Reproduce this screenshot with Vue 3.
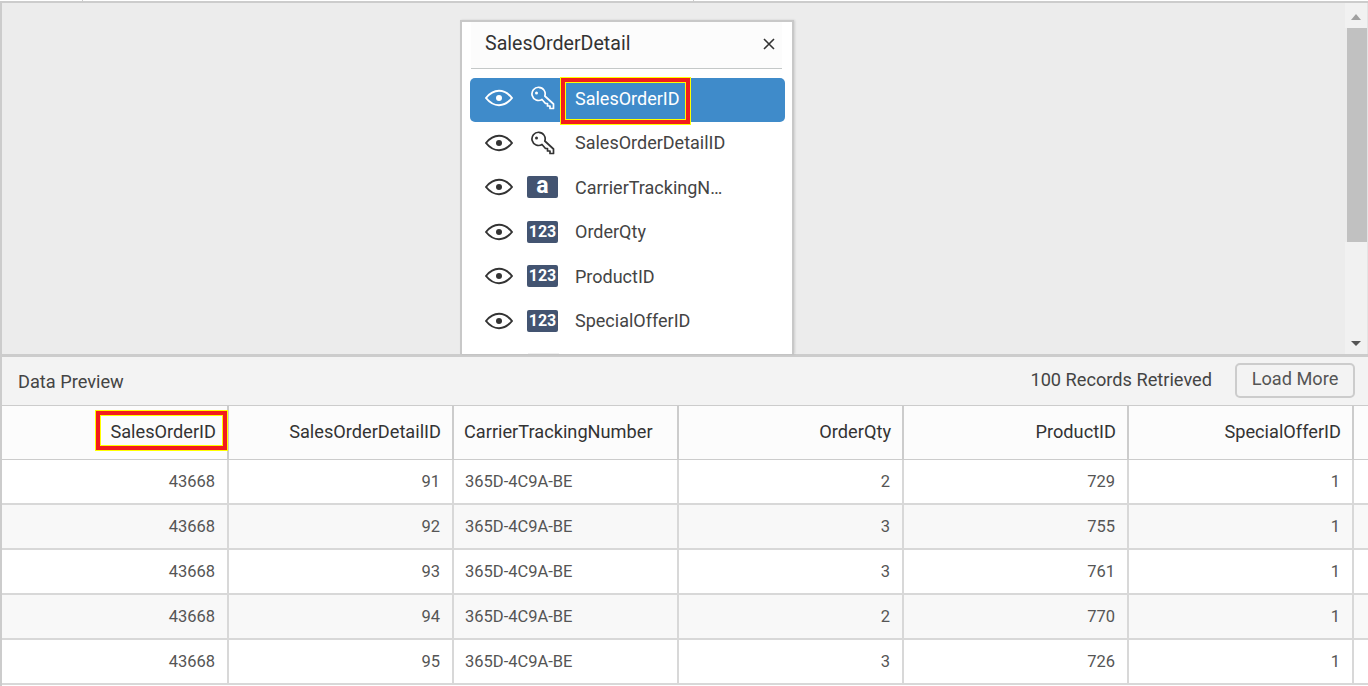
<script setup>
const fields = [
  { name: 'SalesOrderID', type: 'key', active: true, mark: true },
  { name: 'SalesOrderDetailID', type: 'key' },
  { name: 'CarrierTrackingN…', type: 'a' },
  { name: 'OrderQty', type: '123' },
  { name: 'ProductID', type: '123' },
  { name: 'SpecialOfferID', type: '123' }
]
const cols = [
  { name: 'SalesOrderID', mark: true },
  { name: 'SalesOrderDetailID' },
  { name: 'CarrierTrackingNumber', left: true },
  { name: 'OrderQty' },
  { name: 'ProductID' },
  { name: 'SpecialOfferID' }
]
const rows = [
  ['43668', '91', '365D-4C9A-BE', '2', '729', '1'],
  ['43668', '92', '365D-4C9A-BE', '3', '755', '1'],
  ['43668', '93', '365D-4C9A-BE', '3', '761', '1'],
  ['43668', '94', '365D-4C9A-BE', '2', '770', '1'],
  ['43668', '95', '365D-4C9A-BE', '3', '726', '1']
]
</script>

<template>
  <div class="page">
    <div class="top">
      <i class="tick t1"></i>
      <i class="tick t2"></i>
    </div>
    <section class="canvas">
      <div class="panel">
        <div class="phead">
          <span class="ptitle">SalesOrderDetail</span>
          <svg class="close" width="12" height="12" viewBox="0 0 12 12"><path d="M1 1l10 10M11 1L1 11" stroke="#333" stroke-width="1.6" fill="none"/></svg>
        </div>
        <ul class="list">
          <li v-for="f in fields" :key="f.name" class="item" :class="{ active: f.active }">
            <svg class="eye" width="28" height="18" viewBox="0 0 28 18" fill="none">
              <path d="M1 9C5 4 9 1.800 14 1.800S23 4 27 9c-4 5-8 7.200-13 7.200S5 14 1 9z" stroke="currentColor" stroke-width="2"/>
              <circle cx="14" cy="9" r="3" fill="currentColor"/>
            </svg>
            <span class="tcell">
              <svg v-if="f.type === 'key'" class="key" width="24" height="24" viewBox="0 0 24 24" fill="none">
                <path d="M11 13.500A6.600 6.600 0 1 1 13.800 10L22.500 18V22.500H19V20H16.500V17.500H14.500Z" stroke="currentColor" stroke-width="1.700" stroke-linejoin="round"/>
                <circle cx="5.500" cy="7" r="1.500" fill="currentColor"/>
              </svg>
              <span v-else class="badge" :class="{ alpha: f.type === 'a' }">{{ f.type }}</span>
            </span>
            <span class="fname" :class="{ marked: f.mark }">{{ f.name }}</span>
          </li>
        </ul>
        <div class="peek"></div>
      </div>
      <div class="scroll">
        <div class="sbtn"><i class="up"></i></div>
        <div class="thumb"></div>
        <div class="strack"></div>
        <div class="sbtn low"><i class="down"></i></div>
      </div>
    </section>
    <section class="preview">
      <div class="bar">
        <span class="ptxt">Data Preview</span>
        <span class="count">100 Records Retrieved</span>
        <button class="load">Load More</button>
      </div>
      <div class="grid">
        <div class="hrow">
          <div v-for="c in cols" :key="c.name" class="hcell" :class="{ left: c.left }">
            <span :class="{ hmark: c.mark }">{{ c.name }}</span>
          </div>
        </div>
        <div v-for="(r, i) in rows" :key="i" class="drow" :class="{ alt: i % 2 === 1 }">
          <div v-for="(v, j) in r" :key="j" class="dcell" :class="{ left: j === 2 }">{{ v }}</div>
        </div>
      </div>
    </section>
  </div>
</template>

<style>
html, body { margin: 0; background: #fff; overflow: hidden; }
</style>

<style scoped>
.page { width: 1368px; height: 686px; overflow: hidden; display: flex; flex-direction: column; font-family: Roboto, sans-serif; color: #333; background: #fff; }
.top { height: 1px; border-bottom: 2px solid #ccc; position: relative; flex: none; }
.tick { position: absolute; top: 0; width: 1px; height: 1px; background: #ccc; }
.t1 { left: 82px; }
.t2 { left: 693px; }
.canvas { height: 351px; flex: none; background: #ececec; border-left: 2px solid #ccc; border-bottom: 3px solid #ccc; position: relative; }
.panel { position: absolute; left: 458px; top: 17px; width: 330px; height: 332px; border: 2px solid #c8c8c8; border-bottom: none; background: #fff; box-shadow: 1px 0 2px rgba(0,0,0,.12); overflow: hidden; }
.phead { height: 46px; margin: 0 10px 0 9px; border-bottom: 1px solid #c4c8c8; display: flex; align-items: center; justify-content: space-between; padding: 0 7px 0 14px; background: #fcfcfc; }
.ptitle { font-size: 19.6px; color: #333; position: relative; top: -2px; white-space: nowrap; }
.close { position: relative; top: -1px; }
.list { list-style: none; margin: 9px 0 0 8px; padding: 0; width: 315px; }
.item { height: 44.5px; box-sizing: border-box; padding-bottom: 4px; display: flex; align-items: center; color: #333; border-radius: 5px; position: relative; }
.item.active { height: 44px; margin-bottom: .5px; background: #3f8bca; color: #fff; }
.eye { margin-left: 15px; flex: none; }
.tcell { width: 31px; margin-left: 14px; display: flex; justify-content: center; flex: none; }
.key { color: inherit; }
.badge { width: 31px; height: 22px; border-radius: 2px; background: #435471; color: #fff; font-size: 16px; font-weight: 700; line-height: 22px; text-align: center; }
.badge.alpha { font-size: 23px; font-weight: 700; line-height: 20px; }
.fname { margin-left: 17px; font-size: 18px; color: #444; white-space: nowrap; position: relative; }
.active .fname { color: #fff; }
.fname.marked::before { content: ""; position: absolute; left: -14px; right: -10px; top: -10px; bottom: -15px; border: 4px solid #f21c1c; outline: 1px solid #ff0; box-shadow: inset 0 0 0 1px #ff0; }
.peek { position: absolute; left: 66px; bottom: 0; width: 31px; height: 1px; background: #f1f1f1; }
.scroll { position: absolute; right: 0; top: 0; width: 21px; height: 100%; display: flex; flex-direction: column; border-right: 1px solid #e4e4e4; box-sizing: border-box; }
.sbtn { height: 25px; margin-left: -2px; background: #f1f1f1; display: flex; align-items: center; justify-content: center; flex: none; }
.sbtn.low { height: 22px; }
.up { width: 0; height: 0; border: 5px solid transparent; border-top: 0; border-bottom: 6px solid #a0a0a0; margin-top: 2px; }
.down { width: 0; height: 0; border: 5px solid transparent; border-bottom: 0; border-top: 5px solid #555; }
.thumb { height: 214px; background: #c1c1c1; flex: none; }
.strack { flex: 1; margin-left: -2px; background: #f1f1f1; }
.preview { flex: 1; border-left: 2px solid #ccc; min-height: 0; }
.bar { height: 48px; background: #f3f3f3; border-bottom: 1px solid #ccc; display: flex; align-items: center; font-size: 18.2px; color: #444; }
.ptxt { margin-left: 16px; flex: 1; }
.count { margin-right: 23px; position: relative; top: -2px; }
.load { width: 120px; height: 35px; margin-right: 13px; border: 2px solid #ccc; border-radius: 5px; background: #f3f3f3; color: #555; font: 400 18.2px Roboto, sans-serif; padding: 0 0 4px; position: relative; top: -1px; box-sizing: border-box; }
.hrow, .drow { display: flex; }
.hrow { height: 53px; background: #fcfcfc; border-bottom: 1px solid #ccc; }
.hcell { width: 224px; border-right: 2px solid #ccc; margin-right: -1px; display: flex; align-items: center; justify-content: flex-end; padding: 0 0 2px; box-sizing: content-box; height: 51px; font-size: 18.2px; color: #333; flex: none; }
.hcell:first-child { width: 225px; }
.hcell > span { margin: 0 11px; position: relative; white-space: nowrap; }
.hcell.left { justify-content: flex-start; }
.hmark::before { content: ""; position: absolute; left: -14px; right: -11px; top: -10px; bottom: -8px; border: 4px solid #f21c1c; outline: 1px solid #ff0; box-shadow: inset 0 0 0 1px #ff0; }
.drow { height: 43px; border-bottom: 2px solid #d8d8d8; background: #fff; }
.drow.alt { background: #f8f8f8; }
.dcell { width: 212px; padding-right: 12px; border-right: 2px solid #d8d8d8; margin-right: -1px; line-height: 43px; text-align: right; font-size: 16.5px; color: #555; flex: none; }
.dcell:first-child { width: 213px; }
.dcell.left { text-align: left; width: 212px; padding: 0 0 0 12px; }
</style>
